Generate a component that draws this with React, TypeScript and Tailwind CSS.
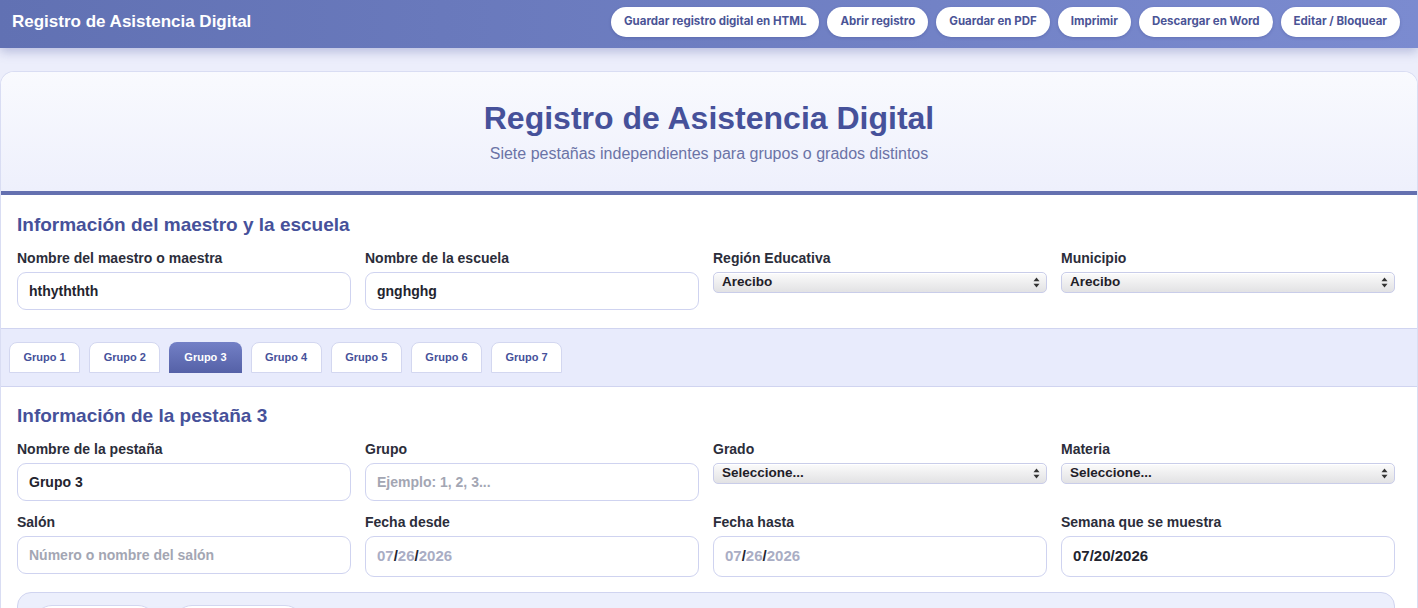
import React from "react";

const topButtons = [
  "Guardar registro digital en HTML",
  "Abrir registro",
  "Guardar en PDF",
  "Imprimir",
  "Descargar en Word",
  "Editar / Bloquear",
];

function Label({ children }: { children: React.ReactNode }) {
  return <div className="text-[14px] font-bold leading-4 text-[#2b2d3a] mb-[6px]">{children}</div>;
}

function TextBox({ value, placeholder }: { value?: string; placeholder?: string }) {
  return (
    <div className="h-[38px] rounded-[9px] border border-[#cfd3f0] bg-white px-[11px] flex items-center text-[14px] font-bold">
      {value ? (
        <span className="text-[#23242e]">{value}</span>
      ) : (
        <span className="text-[#a3a6b3]">{placeholder}</span>
      )}
    </div>
  );
}

function DateBox({ m, d, y, filled }: { m: string; d: string; y: string; filled?: boolean }) {
  const c = filled ? "text-[#23242e]" : "text-[#a9adc4]";
  return (
    <div className="h-[41px] rounded-[9px] border border-[#cfd3f0] bg-white px-[11px] flex items-center text-[15px] font-bold">
      <span className={c}>{m}</span>
      <span className="text-[#23242e]">/</span>
      <span className={c}>{d}</span>
      <span className="text-[#23242e]">/</span>
      <span className={c}>{y}</span>
    </div>
  );
}

function SelectBox({ value }: { value: string }) {
  return (
    <div className="h-[21px] rounded-[5px] border border-[#c9cde9] bg-gradient-to-b from-[#fbfbfb] to-[#e2e2e4] shadow-[inset_0_1px_0_#ffffff] pl-[8px] pr-[6px] flex items-center justify-between text-[13.5px] font-bold text-[#1f2028]">
      <span>{value}</span>
      <svg width="7" height="11" viewBox="0 0 7 11" className="text-[#333]">
        <path d="M3.5 0.5 L6.5 4.2 L0.5 4.2 Z" fill="currentColor" />
        <path d="M3.5 10.5 L6.5 6.8 L0.5 6.8 Z" fill="currentColor" />
      </svg>
    </div>
  );
}

function Field({ label, children }: { label: string; children: React.ReactNode }) {
  return (
    <div className="flex flex-col">
      <Label>{label}</Label>
      {children}
    </div>
  );
}

export default function App() {
  const tabs = ["Grupo 1", "Grupo 2", "Grupo 3", "Grupo 4", "Grupo 5", "Grupo 6", "Grupo 7"];
  return (
    <div className="min-h-screen bg-[#eceefb] font-['Liberation_Sans',Arial,sans-serif]">
      {/* Top bar */}
      <div className="relative z-10 h-[48px] bg-gradient-to-r from-[#6171b3] to-[#7b8bd0] shadow-[0_4px_10px_rgba(90,100,170,0.35)] flex items-center justify-between pl-[12px] pr-[18px]">
        <div className="text-white font-bold text-[17px] leading-5 -mt-[5px]">Registro de Asistencia Digital</div>
        <div className="flex gap-[8px] -mt-[4px]">
          {topButtons.map((b) => (
            <button
              key={b}
              className="h-[30px] px-[13px] rounded-full bg-white text-[#4b5496] text-[11.5px] font-bold font-['Inter',sans-serif] shadow-[0_1px_3px_rgba(40,50,120,0.25)]"
            >
              {b}
            </button>
          ))}
        </div>
      </div>

      {/* Main card */}
      <div className="pt-[23px]">
        <div className="rounded-t-[14px] border-t border-x border-[#d9ddf3] bg-white overflow-hidden">
          {/* Hero */}
          <div className="h-[123px] bg-gradient-to-b from-[#f9fafe] to-[#eef0fc] border-b-[4px] border-[#6470b0] flex flex-col items-center">
            <div className="mt-[27px] text-[32px] leading-[38px] font-bold text-[#46519a]">Registro de Asistencia Digital</div>
            <div className="mt-[7px] text-[16px] leading-[20px] text-[#6b73a6]">Siete pestañas independientes para grupos o grados distintos</div>
          </div>

          {/* Teacher section */}
          <div className="pl-[16px] pr-[22px] pt-[18px] pb-[18px] border-b border-[#d0d4f0]">
            <div className="text-[19px] leading-[23px] font-bold text-[#46519a] mb-[14px]">Información del maestro y la escuela</div>
            <div className="grid grid-cols-4 gap-x-[14px]">
              <Field label="Nombre del maestro o maestra">
                <TextBox value="hthyththth" />
              </Field>
              <Field label="Nombre de la escuela">
                <TextBox value="gnghghg" />
              </Field>
              <Field label="Región Educativa">
                <SelectBox value="Arecibo" />
              </Field>
              <Field label="Municipio">
                <SelectBox value="Arecibo" />
              </Field>
            </div>
          </div>

          {/* Tabs */}
          <div className="h-[58px] bg-[#e8ebfc] border-b border-[#d0d4f0] flex items-start gap-[9px] pl-[8px] pt-[13px]">
            {tabs.map((t, i) =>
              i === 2 ? (
                <div
                  key={t}
                  className="h-[31px] px-[15px] rounded-t-[8px] bg-gradient-to-b from-[#7380c6] to-[#5561a7] text-white text-[11px] font-bold flex items-center"
                >
                  {t}
                </div>
              ) : (
                <div
                  key={t}
                  className="h-[31px] px-[13.5px] rounded-t-[8px] bg-white border border-[#d3d7f0] text-[#46519a] text-[11px] font-bold flex items-center"
                >
                  {t}
                </div>
              )
            )}
          </div>

          {/* Tab info section */}
          <div className="pl-[16px] pr-[22px] pt-[17px] pb-[40px]">
            <div className="text-[19px] leading-[23px] font-bold text-[#46519a] mb-[14px]">Información de la pestaña 3</div>
            <div className="grid grid-cols-4 gap-x-[14px] gap-y-[13px] items-start">
              <Field label="Nombre de la pestaña">
                <TextBox value="Grupo 3" />
              </Field>
              <Field label="Grupo">
                <TextBox placeholder="Ejemplo: 1, 2, 3..." />
              </Field>
              <Field label="Grado">
                <SelectBox value="Seleccione..." />
              </Field>
              <Field label="Materia">
                <SelectBox value="Seleccione..." />
              </Field>
              <Field label="Salón">
                <TextBox placeholder="Número o nombre del salón" />
              </Field>
              <Field label="Fecha desde">
                <DateBox m="07" d="26" y="2026" />
              </Field>
              <Field label="Fecha hasta">
                <DateBox m="07" d="26" y="2026" />
              </Field>
              <Field label="Semana que se muestra">
                <DateBox m="07" d="20" y="2026" filled />
              </Field>
            </div>

            <div className="mt-[15px] rounded-[14px] border border-[#d0d4f0] bg-[#eceffc] pl-[16px] pt-[12px] pb-[16px] flex gap-[18px]">
              <div className="w-[122px] h-[36px] rounded-full bg-white border border-[#d3d7f0]" />
              <div className="w-[129px] h-[36px] rounded-full bg-white border border-[#d3d7f0]" />
            </div>
          </div>
        </div>
      </div>
    </div>
  );
}
